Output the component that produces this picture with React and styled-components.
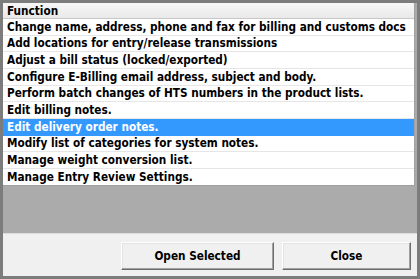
import React from 'react';
import styled, { createGlobalStyle } from 'styled-components';

const GlobalStyle = createGlobalStyle`
    html, body {
        margin: 0;
        padding: 0;
        background: #ffffff;
    }
`

const Window = styled.div`
    width: 420px;
    height: 279px;
    box-sizing: border-box;
    border: 3px solid #7c7c7c;
    display: flex;
    flex-direction: column;
    font-family: "DejaVu Sans Condensed", "DejaVu Sans", sans-serif;
    font-weight: bold;
    font-size: 11.7px;
    color: #000000;
`

const GridArea = styled.div`
    height: 230px;
    background: #ababab;
    border-bottom: 1px solid #dcdcdc;
    display: flex;
    flex-direction: column;
`

const List = styled.div`
    background: #ffffff;
    margin-right: 2px;
    border-right: 1px solid #a0a0a0;
    border-bottom: 1px solid #a0a0a0;
`

const HeaderCell = styled.div`
    height: 15px;
    display: flex;
    align-items: center;
    padding-left: 4px;
    background: linear-gradient(#f7f7f7, #e9e9e9);
    border-bottom: 1px solid #c8c8c8;
`

const Row = styled.div`
    height: 15.67px;
    display: flex;
    align-items: center;
    padding-left: 4px;
    border-bottom: 1px solid ${p => (p.$selected ? '#3399ff' : '#e6e6e6')};
    background: ${p => (p.$selected ? '#3399ff' : '#ffffff')};
    color: ${p => (p.$selected ? '#ffffff' : '#000000')};
    white-space: nowrap;
    &:last-child {
        border-bottom: none;
    }
`

const Footer = styled.div`
    flex: 1;
    background: #f0f0f0;
    display: flex;
    justify-content: flex-end;
    align-items: center;
    gap: 8px;
    padding-right: 6px;
    padding-top: 2px;
`

const Button = styled.button`
    width: ${p => p.$width}px;
    height: 28px;
    background: #f0f0f0;
    border: 1px solid;
    border-color: #ffffff #6e6e6e #6e6e6e #ffffff;
    box-shadow: inset -1px -1px 0 #a0a0a0, inset 1px 1px 0 #e3e3e3;
    font-family: inherit;
    font-weight: bold;
    font-size: 11.7px;
    color: #000000;
    padding: 0;
`

const functions = [
    'Change name, address, phone and fax for billing and customs docs',
    'Add locations for entry/release transmissions',
    'Adjust a bill status (locked/exported)',
    'Configure E-Billing email address, subject and body.',
    'Perform batch changes of HTS numbers in the product lists.',
    'Edit billing notes.',
    'Edit delivery order notes.',
    'Modify list of categories for system notes.',
    'Manage weight conversion list.',
    'Manage Entry Review Settings.',
]

const App = () => {
    const selected = 6

    return (
        <>
            <GlobalStyle />
            <Window>
                <GridArea>
                    <List>
                        <HeaderCell>Function</HeaderCell>
                        {functions.map((fn, idx) => {
                            return (
                                <Row key={idx} $selected={idx === selected}>{fn}</Row>
                            )
                        })}
                    </List>
                </GridArea>
                <Footer>
                    <Button $width={153}>Open Selected</Button>
                    <Button $width={129}>Close</Button>
                </Footer>
            </Window>
        </>
    )
}

export default App
